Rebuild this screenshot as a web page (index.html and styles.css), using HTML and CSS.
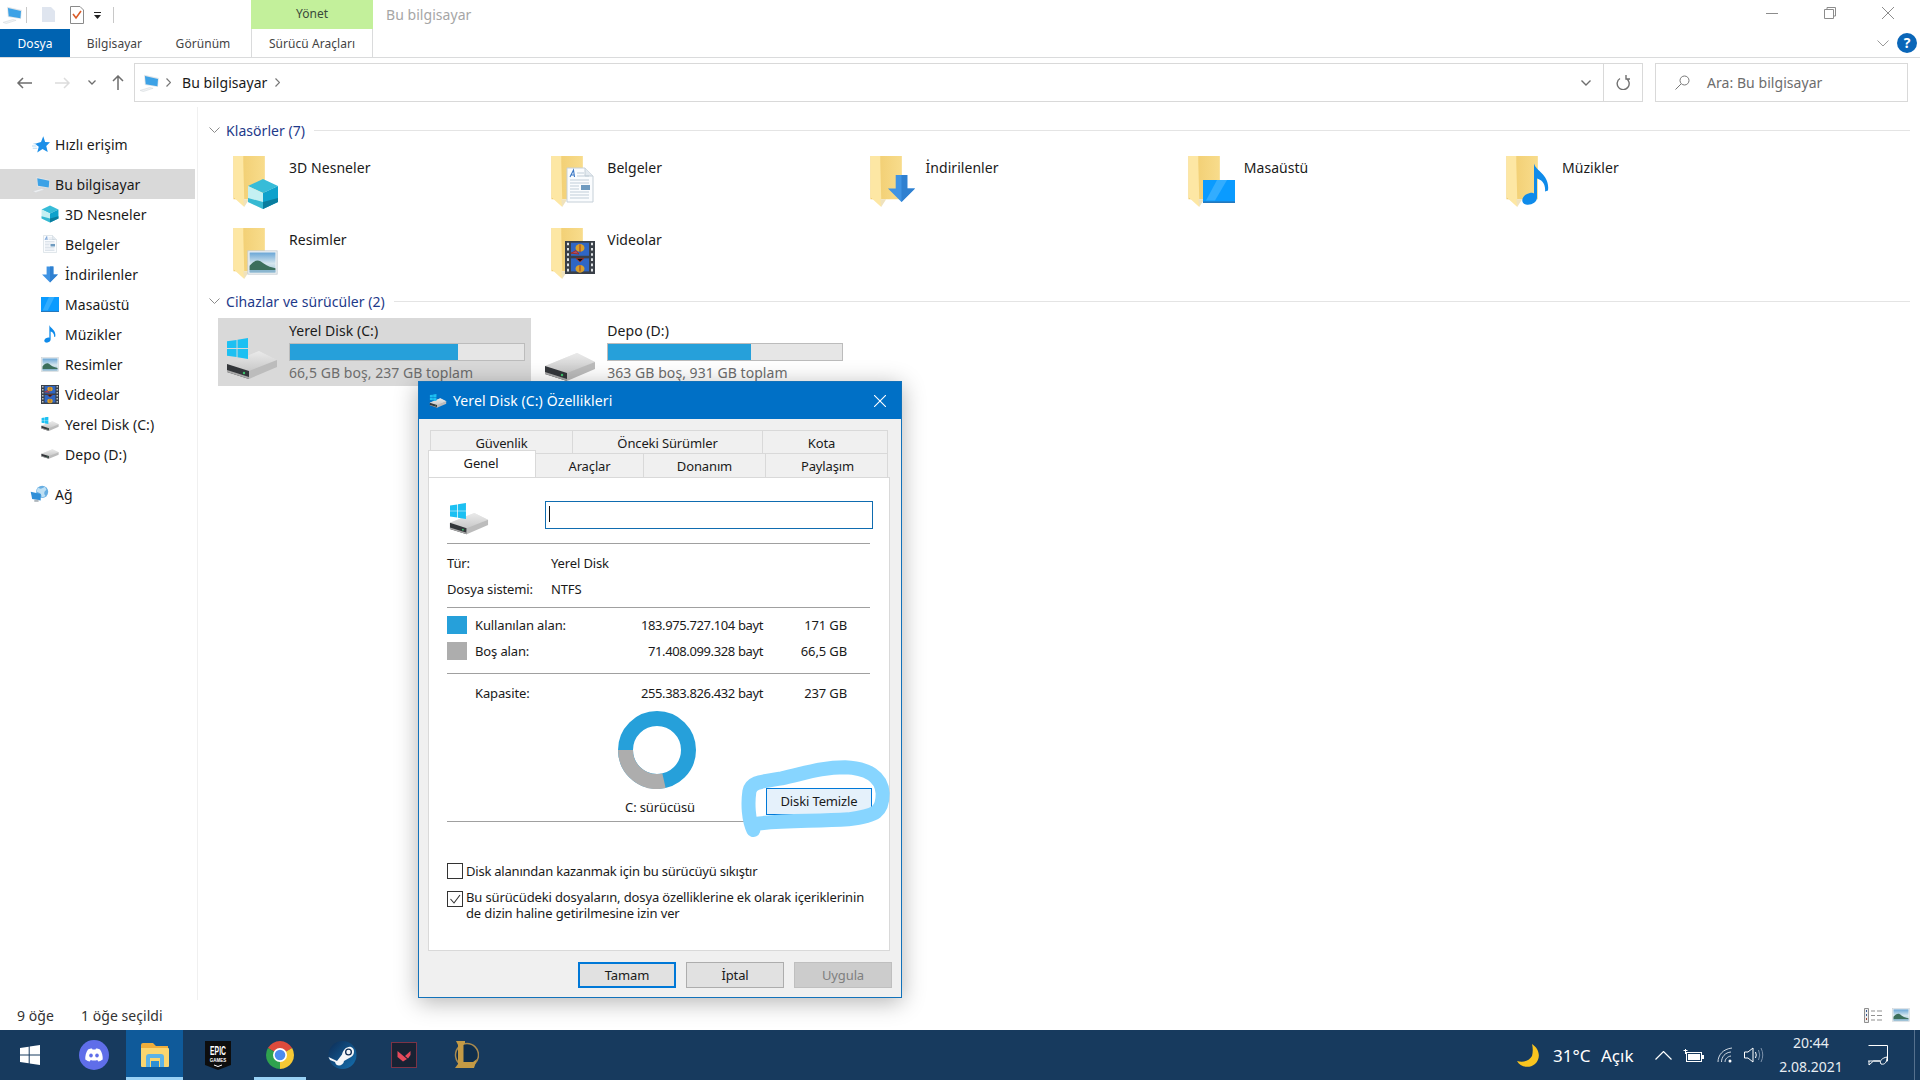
FILE: index.html
```html
<!DOCTYPE html>
<html lang="tr">
<head>
<meta charset="utf-8">
<title>Bu bilgisayar</title>
<link rel="stylesheet" href="styles.css">
</head>
<body>
<svg class="defs" width="0" height="0" aria-hidden="true">
  <defs>
    <linearGradient id="gf" x1="0" y1="0" x2="1" y2="0"><stop offset="0" stop-color="#f0cb6c"/><stop offset="1" stop-color="#f8dc8c"/></linearGradient>
    <linearGradient id="gs" x1="0" y1="0" x2="0" y2="1"><stop offset="0" stop-color="#f2f2f2"/><stop offset="1" stop-color="#b4b4b4"/></linearGradient>
    <linearGradient id="gsky" x1="0" y1="0" x2="0" y2="1"><stop offset="0" stop-color="#6aa6d6"/><stop offset=".55" stop-color="#d5e6ee"/><stop offset="1" stop-color="#9fc3d8"/></linearGradient>
    <linearGradient id="gsteam" x1="0" y1="0" x2="1" y2="1"><stop offset="0" stop-color="#0e2c54"/><stop offset="1" stop-color="#1470b0"/></linearGradient>
    <symbol id="folder" viewBox="0 0 48 52">
      <path d="M0 0H32V44H10L0 44Z" fill="url(#gf)"/>
      <path d="M0 0H10V6L11 44V52L0 42Z" fill="#fde7a4"/>
      <path d="M10 44L11 52L16 44Z" fill="#efe2bd"/>
    </symbol>
    <symbol id="cube" viewBox="0 0 32 32">
      <path d="M16 1L31 8L16 15L1 8Z" fill="#37bcd8"/>
      <path d="M1 8L16 15V31L1 24Z" fill="#c4f0f2"/>
      <path d="M31 8L16 15V31L31 24Z" fill="#0ea2cc"/>
      <path d="M1 20L16 24V31L1 24Z" fill="#36b9d2"/>
      <path d="M31 20L16 24V31L31 24Z" fill="#0a7d9e"/>
    </symbol>
    <symbol id="doc" viewBox="0 0 28 36">
      <path d="M1 1H19L27 9V35H1Z" fill="#fafcfe" stroke="#c6d0d8"/>
      <path d="M19 1V9H27" fill="#e3eaf0" stroke="#c6d0d8"/>
      <path d="M4 10L7.500 3L8.500 10M5 8H8" fill="none" stroke="#3976c4" stroke-width="1.100"/>
      <path d="M11 6H18M11 9H23M4 13H23M4 16H23M4 25H23M4 28H23M4 31H23" stroke="#c0cdd8"/>
      <rect x="15" y="18" width="9" height="5" fill="#6f9bc0"/>
      <path d="M4 19H13M4 22H13" stroke="#c0cdd8"/>
    </symbol>
    <symbol id="down" viewBox="0 0 30 30">
      <path d="M9 1H21V15H29L15 29L1 15H9Z" fill="#3f93e3"/>
      <path d="M15 1H21V15H29L15 29Z" fill="#2f80d0"/>
    </symbol>
    <symbol id="desk" viewBox="0 0 32 28" preserveAspectRatio="none">
      <rect width="32" height="28" fill="#0a9bff"/>
      <path d="M14 0H24L12 25H3Z" fill="#32adff"/>
      <rect y="26" width="32" height="2" fill="#2478bd"/>
    </symbol>
    <symbol id="note" viewBox="0 0 27 42">
      <path d="M12 0C14 8 28 11 26 27L23 28C24 20 19 16 15 15V34C15 39 9 42 4 41C-1 40 -1 34 4 31C8 29 11 29 12 30Z" fill="#0f8bea"/>
    </symbol>
    <symbol id="pic" viewBox="0 0 36 30" preserveAspectRatio="none">
      <rect x="1" y="1" width="34" height="28" fill="#eef2f4" stroke="#c4ccd2"/>
      <rect x="3" y="3" width="30" height="24" fill="url(#gsky)"/>
      <path d="M3 19C9 11 14 11 19 16C24 20 29 21 33 22V24H3Z" fill="#3c6f5c"/>
      <rect x="3" y="24" width="30" height="3" fill="#8bb6cf"/>
    </symbol>
    <symbol id="film" viewBox="0 0 30 38" preserveAspectRatio="none">
      <rect width="30" height="38" fill="#3a4048"/>
      <path d="M2 2H4V5H2ZM2 8H4V11H2ZM2 14H4V17H2ZM2 20H4V23H2ZM2 26H4V29H2ZM2 32H4V35H2ZM26 2H28V5H26ZM26 8H28V11H26ZM26 14H28V17H26ZM26 20H28V23H26ZM26 26H28V29H26ZM26 32H28V35H26Z" fill="#dfe3e6"/>
      <rect x="6" y="2" width="18" height="15" fill="#2f66c4"/>
      <rect x="6" y="20" width="18" height="15" fill="#2f66c4"/>
      <circle cx="15" cy="8" r="4.500" fill="#d8a12c"/><path d="M15 4V13M6 14L11 11L14 15Z" stroke="#a03020" fill="#b04a6a"/>
      <circle cx="15" cy="32" r="4.500" fill="#d8a12c"/><path d="M15 28V35M11 20H19L15 24Z" stroke="#a03020" fill="#111"/>
    </symbol>
    <symbol id="pc" viewBox="0 0 24 22">
      <path d="M6 1L24 5L23 16L7 13.500Z" fill="#dfe4e8"/>
      <path d="M7 2.500L23 6L22.300 15L8 12.500Z" fill="#3da2e6"/>
      <path d="M1 20L13 16.500L17 17.500L5 21.500Z" fill="#f0f2f4" stroke="#d0d5d9" stroke-width=".6"/>
    </symbol>
    <symbol id="star" viewBox="0 0 24 22">
      <path d="M15 0L17.500 7.500L24 8L19 13L21 21L14 17L7 21.500L9 14L4 10L12 7.500Z" fill="#1c8fe8"/>
      <path d="M0 13H6M1 16H7M2 10H6" stroke="#9ccdf2"/>
    </symbol>
    <symbol id="win" viewBox="0 0 22 22">
      <path d="M0 3.500L10 2V10.500H0ZM11 1.800L22 0V10.500H11ZM0 11.500H10V20L0 18.500ZM11 11.500H22V22L11 20.200Z" fill="#1cc0f2"/>
    </symbol>
    <symbol id="drive" viewBox="0 0 52 30">
      <path d="M1 14L33 1L51 10L23 23Z" fill="#dcdcdc"/>
      <path d="M33 1L51 10V12L23 25L1 18V14Z" fill="url(#gs)" opacity=".65"/>
      <path d="M1 14L23 21V29L1 22Z" fill="#33363a"/>
      <path d="M23 21L51 10V17L23 29Z" fill="#bcbcbc"/>
      <path d="M1 20L23 27V29L1 22Z" fill="#a9a9a9"/>
      <circle cx="18" cy="23" r="1.200" fill="#3ec46d"/>
    </symbol>
    <symbol id="drivewin" viewBox="0 0 52 42">
      <use href="#drive" x="0" y="12" width="52" height="30"/>
      <use href="#win" x="1" y="0" width="21" height="21"/>
    </symbol>
    <symbol id="net" viewBox="0 0 28 24">
      <circle cx="17" cy="9" r="8.500" fill="#67aee2"/>
      <path d="M11 3C15 6 17 4 21 2L23 6C19 9 19 12 22 15L16 17C17 12 13 10 9 9Z" fill="#bfe0f4"/>
      <path d="M1 9L15 12V21L3 19Z" fill="#2f8fd8"/>
      <path d="M6 20H12V23H6Z" fill="#aeb6bc"/>
    </symbol>
  </defs>
</svg>

<div class="titlebar">
  <svg class="qa-pc" width="20" height="18"><use href="#pc"/></svg>
  <i class="qa-sep"></i>
  <svg class="qa-page" width="13" height="17" viewBox="0 0 13 17"><path d="M0 1H9L13 5V16H0Z" fill="#dfe5ef"/></svg>
  <svg class="qa-check" width="14" height="18" viewBox="0 0 14 18"><path d="M.5.5H10L13.500 4V17.500H.5Z" fill="#fff" stroke="#8a8a8a"/><path d="M3 8L6 12L11 5" fill="none" stroke="#d95b28" stroke-width="1.600"/></svg>
  <svg class="qa-drop" width="8" height="8" viewBox="0 0 8 8"><path d="M0 0H7V1H0ZM0 3H7L3.500 7Z" fill="#222"/></svg>
  <i class="qa-sep qa-sep2"></i>
  <div class="manage-tab">Yönet</div>
  <div class="win-title">Bu bilgisayar</div>
  <div class="win-controls">
    <svg width="12" height="12" viewBox="0 0 12 12"><path d="M0 6.500H12" stroke="#8c8c8c"/></svg>
    <svg width="12" height="12" viewBox="0 0 12 12"><path d="M.5 2.500H9.500V11.500H.5ZM3 2.500V.5H11.500V9H9.500" fill="none" stroke="#8c8c8c"/></svg>
    <svg width="12" height="12" viewBox="0 0 12 12"><path d="M0 0L12 12M12 0L0 12" stroke="#8c8c8c"/></svg>
  </div>
</div>

<div class="ribbon">
  <div class="rtab file">Dosya</div>
  <div class="rtab rtab-pc">Bilgisayar</div>
  <div class="rtab rtab-view">Görünüm</div>
  <div class="rtab rtab-drive">Sürücü Araçları</div>
  <div class="ribbon-end">
    <svg width="12" height="7" viewBox="0 0 12 7"><path d="M.5.5L6 6L11.500.5" fill="none" stroke="#9a9a9a"/></svg>
    <div class="help">?</div>
  </div>
</div>

<div class="addr">
  <svg class="nav-btn back" width="16" height="12" viewBox="0 0 16 12"><path d="M16 6H2M7 1L2 6L7 11" fill="none" stroke="#6e6e6e" stroke-width="1.500"/></svg>
  <svg class="nav-btn fwd" width="16" height="12" viewBox="0 0 16 12"><path d="M0 6H14M9 1L14 6L9 11" fill="none" stroke="#dcdcdc" stroke-width="1.500"/></svg>
  <svg class="nav-btn recent" width="8" height="5" viewBox="0 0 8 5"><path d="M.5.5L4 4L7.500.5" fill="none" stroke="#6e6e6e" stroke-width="1.300"/></svg>
  <svg class="nav-btn up" width="12" height="15" viewBox="0 0 12 15"><path d="M6 15V1M1 6L6 1L11 6" fill="none" stroke="#6e6e6e" stroke-width="1.500"/></svg>
  <div class="addr-box">
    <svg class="addr-pc" width="20" height="18"><use href="#pc"/></svg>
    <svg class="crumb c1" width="5" height="9" viewBox="0 0 5 9"><path d="M.5.5L4.500 4.500L.5 8.500" fill="none" stroke="#777" stroke-width="1.200"/></svg>
    <span class="crumb-text">Bu bilgisayar</span>
    <svg class="crumb c2" width="5" height="9" viewBox="0 0 5 9"><path d="M.5.5L4.500 4.500L.5 8.500" fill="none" stroke="#777" stroke-width="1.200"/></svg>
    <svg class="addr-drop" width="10" height="6" viewBox="0 0 10 6"><path d="M.5.5L5 5L9.500.5" fill="none" stroke="#6e6e6e" stroke-width="1.400"/></svg>
    <div class="addr-refresh">
      <svg width="14" height="15" viewBox="0 0 14 15"><path d="M4 3.500A6 6 0 1 0 10 3.300M10 0V4H14" fill="none" stroke="#707070" stroke-width="1.400"/></svg>
    </div>
  </div>
  <div class="search">
    <svg width="15" height="15" viewBox="0 0 15 15"><circle cx="9.500" cy="5.500" r="4.500" fill="none" stroke="#777"/><path d="M6 9L.5 14.500" stroke="#777"/></svg>
    <span>Ara: Bu bilgisayar</span>
  </div>
</div>

<div class="main">
  <nav class="nav">
    <div class="nrow top quick"><svg width="18" height="17"><use href="#star"/></svg><span>Hızlı erişim</span></div>
    <div class="nrow top sel"><svg width="18" height="17"><use href="#pc"/></svg><span>Bu bilgisayar</span></div>
    <div class="nrow"><svg width="18" height="18"><use href="#cube"/></svg><span>3D Nesneler</span></div>
    <div class="nrow"><svg width="18" height="18"><use href="#doc"/></svg><span>Belgeler</span></div>
    <div class="nrow"><svg width="18" height="17"><use href="#down"/></svg><span>İndirilenler</span></div>
    <div class="nrow"><svg width="18" height="15"><use href="#desk"/></svg><span>Masaüstü</span></div>
    <div class="nrow"><svg width="18" height="18"><use href="#note"/></svg><span>Müzikler</span></div>
    <div class="nrow"><svg width="18" height="15"><use href="#pic"/></svg><span>Resimler</span></div>
    <div class="nrow"><svg width="18" height="19"><use href="#film"/></svg><span>Videolar</span></div>
    <div class="nrow"><svg width="20" height="16"><use href="#drivewin"/></svg><span>Yerel Disk (C:)</span></div>
    <div class="nrow"><svg width="18" height="12"><use href="#drive"/></svg><span>Depo (D:)</span></div>
    <div class="nrow top net"><svg width="20" height="18"><use href="#net"/></svg><span>Ağ</span></div>
  </nav>

  <section class="content">
    <div class="ghead"><svg width="11" height="6" viewBox="0 0 11 6"><path d="M.5.5L5.500 5.500L10.500.5" fill="none" stroke="#8a8a8a"/></svg><span>Klasörler (7)</span></div>
    <div class="folders">
      <div class="tile"><div class="ficon"><svg class="fbase" width="48" height="51"><use href="#folder"/></svg><svg class="ov ov-cube" width="32" height="32"><use href="#cube"/></svg></div><span>3D Nesneler</span></div>
      <div class="tile"><div class="ficon"><svg class="fbase" width="48" height="51"><use href="#folder"/></svg><svg class="ov ov-doc" width="28" height="36"><use href="#doc"/></svg></div><span>Belgeler</span></div>
      <div class="tile"><div class="ficon"><svg class="fbase" width="48" height="51"><use href="#folder"/></svg><svg class="ov ov-down" width="29" height="29"><use href="#down"/></svg></div><span>İndirilenler</span></div>
      <div class="tile"><div class="ficon"><svg class="fbase" width="48" height="51"><use href="#folder"/></svg><svg class="ov ov-desk" width="32" height="23"><use href="#desk"/></svg></div><span>Masaüstü</span></div>
      <div class="tile"><div class="ficon"><svg class="fbase" width="48" height="51"><use href="#folder"/></svg><svg class="ov ov-note" width="27" height="43"><use href="#note"/></svg></div><span>Müzikler</span></div>
      <div class="tile"><div class="ficon"><svg class="fbase" width="48" height="51"><use href="#folder"/></svg><svg class="ov ov-pic" width="31" height="25"><use href="#pic"/></svg></div><span>Resimler</span></div>
      <div class="tile"><div class="ficon"><svg class="fbase" width="48" height="51"><use href="#folder"/></svg><svg class="ov ov-film" width="30" height="33"><use href="#film"/></svg></div><span>Videolar</span></div>
    </div>
    <div class="ghead"><svg width="11" height="6" viewBox="0 0 11 6"><path d="M.5.5L5.500 5.500L10.500.5" fill="none" stroke="#8a8a8a"/></svg><span>Cihazlar ve sürücüler (2)</span></div>
    <div class="drives">
      <div class="dtile active">
        <svg class="dicon" width="52" height="42"><use href="#drivewin"/></svg>
        <div class="dinfo"><div class="dname">Yerel Disk (C:)</div><div class="dbar"><i style="width:72%"></i></div><div class="dsub">66,5 GB boş, 237 GB toplam</div></div>
      </div>
      <div class="dtile">
        <svg class="dicon dicon2" width="52" height="30"><use href="#drive"/></svg>
        <div class="dinfo"><div class="dname">Depo (D:)</div><div class="dbar"><i style="width:61%"></i></div><div class="dsub">363 GB boş, 931 GB toplam</div></div>
      </div>
    </div>
  </section>
</div>

<div class="status">
  <span class="st1">9 öğe</span><span class="st2">1 öğe seçildi</span>
  <div class="viewbtns">
    <svg width="18" height="15" viewBox="0 0 18 15"><path d="M.5.5H4.500V14.500H.5Z" fill="#eee" stroke="#8f8f8f"/><path d="M2 3H3M2 7H3" stroke="#3a5a90" stroke-width="2"/><path d="M2 11H3" stroke="#a04030" stroke-width="2"/><path d="M7 3H11M13 3H18M7 7.500H11M13 7.500H18M7 12H11M13 12H18" stroke="#8f8f8f"/></svg>
    <svg width="18" height="14"><use href="#pic"/></svg>
  </div>
</div>

<footer class="taskbar">
  <div class="tb tb-start"><svg width="20" height="20" viewBox="0 0 20 20"><path d="M0 3L8.700 1.800V9.500H0ZM9.700 1.600L20 0V9.500H9.700ZM0 10.500H8.700V18.200L0 17ZM9.700 10.500H20V20L9.700 18.400Z" fill="#fff"/></svg></div>
  <div class="tb tb-discord"><svg width="30" height="30" viewBox="0 0 30 30"><circle cx="15" cy="15" r="15" fill="#5f6ee9"/><path d="M9 9.500C11 8.500 12.500 8.300 13 8.500L13.500 9.500H16.500L17 8.500C17.500 8.300 19 8.500 21 9.500C23 12.500 24 16 23.700 19.500C22 20.800 20.500 21.300 19.300 21.500L18.300 19.900C16 20.600 14 20.600 11.700 19.900L10.700 21.500C9.500 21.300 8 20.800 6.300 19.500C6 16 7 12.500 9 9.500Z" fill="#fff"/><ellipse cx="12" cy="15.500" rx="1.800" ry="2" fill="#5f6ee9"/><ellipse cx="18" cy="15.500" rx="1.800" ry="2" fill="#5f6ee9"/></svg></div>
  <div class="tb tb-explorer"><svg width="28" height="24" viewBox="0 0 28 24"><path d="M0 2Q0 0 2 0H12L15 3H27V7H0Z" fill="#eeae3c"/><path d="M0 5H27Q28 5 28 6V23Q28 24 27 24H1Q0 24 0 23Z" fill="#fbd66f"/><path d="M5 24V14Q5 11 8 11H20Q23 11 23 14V24H19V15H9V24Z" fill="#5cb2e6"/><path d="M10 18H18V24H10Z" fill="#2f8fd4"/></svg></div>
  <div class="tb tb-epic"><svg width="26" height="29" viewBox="0 0 26 29"><path d="M0 0H26V24L13 29L0 24Z" fill="#0d0d0d"/><text transform="translate(13 13.500) scale(.85 1.500)" text-anchor="middle" class="ep1">EPIC</text><text transform="translate(13 20.500)" text-anchor="middle" class="ep2">GAMES</text><path d="M9 24L13 25.500L17 24" fill="none" stroke="#fff"/></svg></div>
  <div class="tb tb-chrome"><svg width="28" height="28" viewBox="0 0 28 28"><path d="M14 14L1.880 7A14 14 0 0 1 26.120 7Z" fill="#de4b3c"/><path d="M14 14L26.120 7A14 14 0 0 1 14 28Z" fill="#f7c934"/><path d="M14 14L14 28A14 14 0 0 1 1.880 7Z" fill="#2fa24e"/><circle cx="14" cy="14" r="7" fill="#fff"/><circle cx="14" cy="14" r="5.300" fill="#4c8bf0"/></svg></div>
  <div class="tb tb-steam"><svg width="29" height="28" viewBox="0 0 29 28"><circle cx="14.500" cy="14" r="14" fill="url(#gsteam)"/><path d="M.5 16L9 20L14 13.500C15 9 19 5 23 6C27 7 27 14 23 16L16 20C15.500 25 8 26.500 7 21L2 19Z" fill="#f4f6f8"/><circle cx="20.500" cy="11" r="3.500" fill="#0f2c52"/><circle cx="20.500" cy="11" r="2.200" fill="#f4f6f8"/></svg></div>
  <div class="tb tb-val"><svg width="26" height="26" viewBox="0 0 26 26"><rect x=".5" y=".5" width="25" height="25" fill="#182233" stroke="#7d3346"/><path d="M6.500 9L16 17L12 19.500L6.500 15ZM19.500 9V13L17 16.500L14 14Z" fill="#e64a5c"/></svg></div>
  <div class="tb tb-lol"><svg width="26" height="28" viewBox="0 0 26 28"><circle cx="14" cy="14" r="11.500" fill="#0f2e4c" stroke="#a98a4f" stroke-width="1.500"/><path d="M3 0H12V2L10.500 4V21H20L24 18L21 27H2L5 23V4Z" fill="#c49a45"/></svg></div>
  <div class="tray">
    <svg class="moon" width="23" height="23" viewBox="0 0 23 23"><path d="M15 0C23 5 24 15 18 20C12 25 3 23 0 17C6 19 12 17 15 12C16 8 16 4 15 0Z" fill="#f9c41f"/></svg>
    <span class="temp">31°C</span><span class="cond">Açık</span>
    <svg class="t-up" width="17" height="9" viewBox="0 0 17 9"><path d="M.5 8.500L8.500.5L16.500 8.500" fill="none" stroke="#fff" stroke-width="1.200"/></svg>
    <svg class="t-bat" width="21" height="13" viewBox="0 0 21 13"><path d="M2.500 0V5M.5 1.500H4.500" stroke="#fff"/><rect x="3.500" y="3.500" width="15" height="9" fill="none" stroke="#fff"/><rect x="5" y="5" width="12" height="6" fill="#fff"/><rect x="19" y="6" width="2" height="4" fill="#fff"/></svg>
    <svg class="t-wifi" width="16" height="16" viewBox="0 0 16 16"><path d="M1 15C1 8 6 2 15 1M4.500 15C4.500 10 8 5.500 14 5M8 15C8 12 10.500 9.500 14 9" fill="none" stroke="#cfd8e2"/><circle cx="13" cy="14" r="1.500" fill="#fff"/></svg>
    <svg class="t-vol" width="20" height="16" viewBox="0 0 20 16"><path d="M.5 5H4L9 1V15L4 11H.5Z" fill="none" stroke="#fff"/><path d="M11.500 5Q13 8 11.500 11" fill="none" stroke="#fff"/><path d="M14.500 3Q17 8 14.500 13M17 1Q20.500 8 17 15" fill="none" stroke="#7d92ab"/></svg>
    <div class="clock"><div>20:44</div><div>2.08.2021</div></div>
    <svg class="t-note" width="20" height="21" viewBox="0 0 20 21"><path d="M.5.5H19.500V16H18M12 16H5.500L1 20V16H.5Z" fill="none" stroke="#fff"/><path d="M13 19C11 16 14 13 19 12C19 17 17 20 13 19Z" fill="none" stroke="#fff"/></svg>
    <i class="t-show"></i>
  </div>
</footer>

<section class="dialog">
  <header class="dlg-title">
    <svg width="18" height="14"><use href="#drivewin"/></svg>
    <span>Yerel Disk (C:) Özellikleri</span>
    <svg class="dlg-x" width="12" height="12" viewBox="0 0 12 12"><path d="M0 0L12 12M12 0L0 12" stroke="#fff" stroke-width="1.100"/></svg>
  </header>
  <div class="tabs">
    <div class="trow trow1"><div class="tab t-gv">Güvenlik</div><div class="tab t-on">Önceki Sürümler</div><div class="tab t-ko">Kota</div></div>
    <div class="trow trow2"><div class="tab t-active">Genel</div><div class="tab t-ar">Araçlar</div><div class="tab t-do">Donanım</div><div class="tab t-pa">Paylaşım</div></div>
  </div>
  <div class="panel">
    <div class="name-row">
      <svg class="name-icon" width="40" height="32"><use href="#drivewin"/></svg>
      <div class="name-input"><i></i></div>
    </div>
    <hr class="r1">
    <div class="kv kv-first"><span>Tür:</span><span>Yerel Disk</span></div>
    <div class="kv"><span>Dosya sistemi:</span><span>NTFS</span></div>
    <hr class="r2">
    <div class="cap cap-first"><i class="sw used"></i><span class="lb">Kullanılan alan:</span><span class="by">183.975.727.104 bayt</span><span class="gb">171 GB</span></div>
    <div class="cap"><i class="sw free"></i><span class="lb">Boş alan:</span><span class="by">71.408.099.328 bayt</span><span class="gb">66,5 GB</span></div>
    <hr class="r3">
    <div class="cap cap-total"><i class="sw"></i><span class="lb">Kapasite:</span><span class="by">255.383.826.432 bayt</span><span class="gb">237 GB</span></div>
    <div class="chart">
      <div class="chart-left">
        <svg class="donut" width="78" height="78" viewBox="0 0 78 78">
          <circle cx="39" cy="39" r="31.500" fill="none" stroke="#26a0da" stroke-width="15"/>
          <path d="M46 69.700A31.500 31.500 0 0 1 7.500 39" fill="none" stroke="#adadad" stroke-width="15"/>
        </svg>
        <div class="drive-label">C: sürücüsü</div>
      </div>
      <div class="clean">Diski Temizle</div>
    </div>
    <hr class="r4">
    <div class="check c-first"><i class="box"></i><span>Disk alanından kazanmak için bu sürücüyü sıkıştır</span></div>
    <div class="check c-second"><i class="box"><svg width="14" height="14" viewBox="0 0 14 14"><path d="M2.500 7L6 11L12 3" fill="none" stroke="#333" stroke-width="1.100"/></svg></i><span>Bu sürücüdeki dosyaların, dosya özelliklerine ek olarak içeriklerinin<br>de dizin haline getirilmesine izin ver</span></div>
  </div>
  <div class="dlg-btns">
    <div class="btn default">Tamam</div><div class="btn">İptal</div><div class="btn disabled">Uygula</div>
  </div>
  <svg class="marker" width="500" height="330" viewBox="0 0 1500 990"><path d="M1015 450C1000 420 998 370 1003 335C1008 305 1040 305 1100 295C1170 280 1220 262 1290 262C1360 265 1400 290 1403 340C1403 395 1385 408 1300 418C1200 425 1100 420 1020 432" fill="none" stroke="#87d5ff" stroke-width="42" stroke-linecap="round" stroke-linejoin="round"/></svg>
</section>
</body>
</html>
```

FILE: styles.css
```css
* { box-sizing: border-box; }
html, body { margin: 0; height: 100%; }
body {
  position: relative;
  width: 1920px;
  height: 1080px;
  overflow: hidden;
  background: #fff;
  color: #1a1a1a;
  font-family: "Noto Sans", "Open Sans", sans-serif;
  font-size: 14px;
  letter-spacing: 0.05px;
  display: flex;
  flex-direction: column;
}
i { display: block; }
svg { display: block; flex: none; }
.defs { position: absolute; }

/* title bar */
.titlebar { height: 29px; display: flex; align-items: center; flex: none; }
.qa-pc { margin-left: 2px; }
.qa-sep { width: 1px; height: 16px; background: #c8c8c8; margin-left: 4px; }
.qa-page { margin-left: 15px; }
.qa-check { margin-left: 15px; }
.qa-drop { margin-left: 10px; margin-top: 3px; }
.qa-sep2 { margin-left: 11px; }
.manage-tab { margin-left: 137px; width: 122px; height: 29px; background: #c3f09b; text-align: center; font-size: 12px; line-height: 28px; color: #3a4a3a; }
.win-title { margin-left: 13px; color: #a6a6a6; line-height: 29px; }
.win-controls { margin-left: auto; display: flex; gap: 46px; padding-right: 26px; margin-top: -3px; }

/* ribbon */
.ribbon { height: 29px; flex: none; display: flex; border-bottom: 1px solid #dadbdc; font-size: 12px; color: #444; line-height: 29px; }
.rtab { text-align: center; }
.file { width: 70px; background: #0063b1; color: #fff; }
.rtab-pc { width: 71px; margin-left: 9px; }
.rtab-view { width: 76px; margin-left: 15px; }
.rtab-drive { width: 122px; margin-left: 10px; border-left: 1px solid #dadbdc; border-right: 1px solid #dadbdc; }
.ribbon-end { margin-left: auto; display: flex; align-items: center; gap: 8px; padding-right: 3px; }
.help { width: 20px; height: 20px; border-radius: 50%; background: #0a66b8; color: #fff; font-weight: 700; font-size: 14px; line-height: 20px; text-align: center; }

/* address */
.addr { height: 49px; flex: none; display: flex; align-items: center; }
.back { margin-left: 16px; }
.fwd { margin-left: 23px; }
.recent { margin-left: 17px; }
.up { margin-left: 16px; }
.addr-box { margin-left: 10px; width: 1509px; height: 39px; border: 1px solid #d9d9d9; display: flex; align-items: center; }
.addr-pc { margin-left: 4px; }
.crumb.c1 { margin-left: 7px; }
.crumb-text { margin-left: 11px; }
.crumb.c2 { margin-left: 8px; }
.addr-drop { margin-left: auto; margin-right: 12px; }
.addr-refresh { width: 39px; height: 37px; border-left: 1px solid #d9d9d9; display: flex; align-items: center; justify-content: center; }
.search { margin-left: 12px; width: 253px; height: 39px; border: 1px solid #d9d9d9; display: flex; align-items: center; color: #6d6d6d; }
.search svg { margin-left: 19px; }
.search span { margin-left: 17px; }

/* main */
.main { flex: 1; display: flex; min-height: 0; }
.nav { width: 198px; flex: none; padding-top: 22px; border-right: 1px solid #f0f0f0; padding-right: 2px; }
.nrow { height: 30px; display: flex; align-items: center; padding-left: 41px; }
.nrow svg { width: 18px; }
.nrow span { margin-left: 6px; }
.nrow.top { padding-left: 32px; }
.nrow.top span { margin-left: 5px; }
.nrow.net { padding-left: 30px; }
.nrow.net svg { width: 20px; }
.quick { margin-bottom: 10px; }
.sel { background: #d9d9d9; }
.net { margin-top: 10px; }

.content { flex: 1; padding-top: 13px; min-width: 0; }
.ghead { height: 20px; display: flex; align-items: center; padding-left: 11px; padding-right: 10px; color: #1e3a8a; }
.ghead span { margin-left: 6px; }
.ghead::after { content: ""; flex: 1; height: 1px; background: #e4e4e4; margin-left: 9px; }
.folders { margin: 15px 0 -1px 35px; display: grid; grid-template-columns: repeat(5, 318.25px); grid-auto-rows: 65px; row-gap: 7px; }
.tile { display: flex; }
.tile > span { margin-left: 8px; padding-top: 3px; line-height: 20px; }
.ficon { position: relative; width: 48px; height: 52px; flex: none; padding-top: 1px; }
.ov { position: absolute; }
.ov-cube { left: 14px; top: 23px; }
.ov-doc { left: 15px; top: 12px; }
.ov-down { left: 17px; top: 19px; }
.ov-desk { left: 15px; top: 25px; }
.ov-note { left: 16px; top: 8px; }
.ov-pic { left: 14px; top: 23px; }
.ov-film { left: 14px; top: 14px; }

.drives { margin: 7px 0 0 20px; display: grid; grid-template-columns: repeat(2, 318.25px); }
.dtile { width: 313px; height: 68px; display: flex; padding-left: 8px; }
.active { background: #d9d9d9; }
.dicon { margin-top: 20px; }
.dicon2 { margin-top: 34px; }
.dinfo { margin-left: 11px; padding-top: 3px; width: 236px; }
.dname { line-height: 20px; }
.dbar { height: 18px; margin-top: 2px; border: 1px solid #bcbcbc; background: #e6e6e6; }
.dbar i { height: 100%; background: #26a0da; }
.dsub { margin-top: 2px; line-height: 20px; color: #6d6d6d; white-space: nowrap; }

/* status */
.status { height: 30px; flex: none; display: flex; align-items: center; color: #333; font-size: 14px; }
.st1 { margin-left: 17px; width: 64px; }
.viewbtns { margin-left: auto; display: flex; gap: 10px; padding-right: 10px; }

/* taskbar */
.taskbar { height: 50px; flex: none; background: #173a5e; display: flex; align-items: center; color: #fff; }
.tb { height: 50px; width: 52px; display: flex; align-items: center; justify-content: center; margin-right: 10px; flex: none; }
.tb-start { width: 60px; margin-right: 8px; }
.tb-discord { margin-right: 6px; }
.tb-explorer { width: 57px; background: #0f5a9a; border-bottom: 3px solid #99d1f5; padding-top: 3px; margin-right: 9px; }
.tb-chrome { border-bottom: 3px solid #99d1f5; padding-top: 3px; }
.ep1 { font: 700 8px "Liberation Sans", sans-serif; fill: #fff; letter-spacing: 0; }
.ep2 { font: 700 4.500px "Liberation Sans", sans-serif; fill: #fff; letter-spacing: 0; }
.tray { margin-left: auto; width: 403px; display: flex; align-items: center; flex: none; }
.temp { margin-left: 13px; font-size: 17px; width: 37px; white-space: nowrap; letter-spacing: 0; }
.cond { margin-left: 11px; font-size: 17px; width: 33px; letter-spacing: 0; }
.t-up { margin-left: 21px; }
.t-bat { margin-left: 11px; }
.t-wifi { margin-left: 13px; }
.t-vol { margin-left: 11px; }
.clock { width: 96px; text-align: center; font-size: 14px; line-height: 24px; color: #e8edf2; margin-left: -1px; letter-spacing: 0; }
.t-note { margin-left: 9px; }
.t-show { width: 1px; height: 50px; background: #55708d; margin-left: 26px; }

/* dialog */
.dialog { position: absolute; left: 418px; top: 381px; width: 484px; height: 617px; background: #f0f0f0; border: 1px solid #1272ba; box-shadow: 0 4px 22px rgba(0,0,0,.3); font-size: 13px; letter-spacing: -0.13px; display: flex; flex-direction: column; }
.dlg-title { height: 37px; flex: none; background: #0070c6; color: #fff; display: flex; align-items: center; padding-left: 10px; font-size: 14px; letter-spacing: 0.1px; }
.dlg-title span { margin-left: 6px; }
.dlg-x { margin-left: auto; margin-right: 15px; }
.tabs { margin: 11px 0 0 9px; }
.trow { display: flex; }
.trow1 { height: 23px; margin-left: 2px; }
.trow2 { height: 24px; }
.tab { text-align: center; background: #f0f0f0; border: 1px solid #d9d9d9; border-bottom: 0; border-left: 0; line-height: 25px; }
.trow1 .tab { line-height: 25px; }
.t-gv { width: 143px; border-left: 1px solid #d9d9d9; }
.t-on { width: 190px; }
.t-ko { width: 125px; padding-right: 7px; }
.t-active { width: 108px; height: 27px; margin-top: -3px; background: #fff; border-left: 1px solid #d9d9d9; position: relative; z-index: 1; line-height: 24px; margin-bottom: -1px; padding-right: 2px; }
.t-ar { width: 108px; }
.t-do { width: 122px; }
.t-pa { width: 122px; padding-left: 2px; }
.panel { margin-left: 9px; width: 462px; height: 474px; flex: none; background: #fff; border: 1px solid #d9d9d9; padding: 23px 19px 0 18px; }
hr { border: 0; margin: 0; height: 1px; background: #a0a0a0; }
.name-row { display: flex; height: 28px; }
.name-icon { margin-left: 2px; margin-top: 2px; height: 32px; }
.name-input { margin-left: 56px; width: 328px; height: 28px; flex: none; border: 1px solid #0f6cb0; padding: 4px 3px; }
.name-input i { width: 1px; height: 16px; background: #111; }
.r1 { margin-top: 14px; }
.kv { height: 26px; display: flex; align-items: center; }
.kv-first { margin-top: 6px; }
.kv span:first-child { width: 104px; }
.r2 { margin-top: 5px; }
.cap { height: 26px; display: flex; align-items: center; }
.cap-first { margin-top: 4px; }
.sw { width: 20px; height: 18px; }
.used { background: #26a0da; }
.free { background: #adadad; }
.lb { margin-left: 8px; width: 150px; }
.by { width: 138px; text-align: right; letter-spacing: -0.38px; white-space: nowrap; }
.gb { width: 84px; text-align: right; }
.r3 { margin-top: 9px; }
.cap-total { margin-top: 6px; }
.chart { display: flex; margin-top: 5px; height: 110px; }
.chart-left { width: 319px; flex: none; }
.donut { margin-left: 171px; }
.drive-label { margin: 10px 0 0 173px; width: 80px; line-height: 16px; text-align: center; white-space: nowrap; }
.clean { align-self: flex-end; margin-bottom: 6px; width: 106px; height: 27px; line-height: 25px; text-align: center; background: #e5f1fb; border: 1px solid #0078d7; white-space: nowrap; flex: none; }
.r4 { width: 423px; }
.check { display: flex; line-height: 16px; white-space: nowrap; }
.c-first { margin-top: 41px; letter-spacing: -0.22px; }
.c-second { margin-top: 12px; }
.c-second span { margin-top: -2px; }
.box { width: 16px; height: 16px; border: 1px solid #333; flex: none; margin-right: 3px; }
.dlg-btns { margin-top: 11px; display: flex; justify-content: flex-end; gap: 10px; padding-right: 9px; }
.btn { width: 98px; height: 26px; background: #e1e1e1; border: 1px solid #adadad; text-align: center; line-height: 24px; }
.default { border: 2px solid #0078d7; line-height: 22px; }
.disabled { background: #ccc; border-color: #bfbfbf; color: #7f7f7f; }
.marker { position: absolute; left: -4px; top: 298px; pointer-events: none; }
```
